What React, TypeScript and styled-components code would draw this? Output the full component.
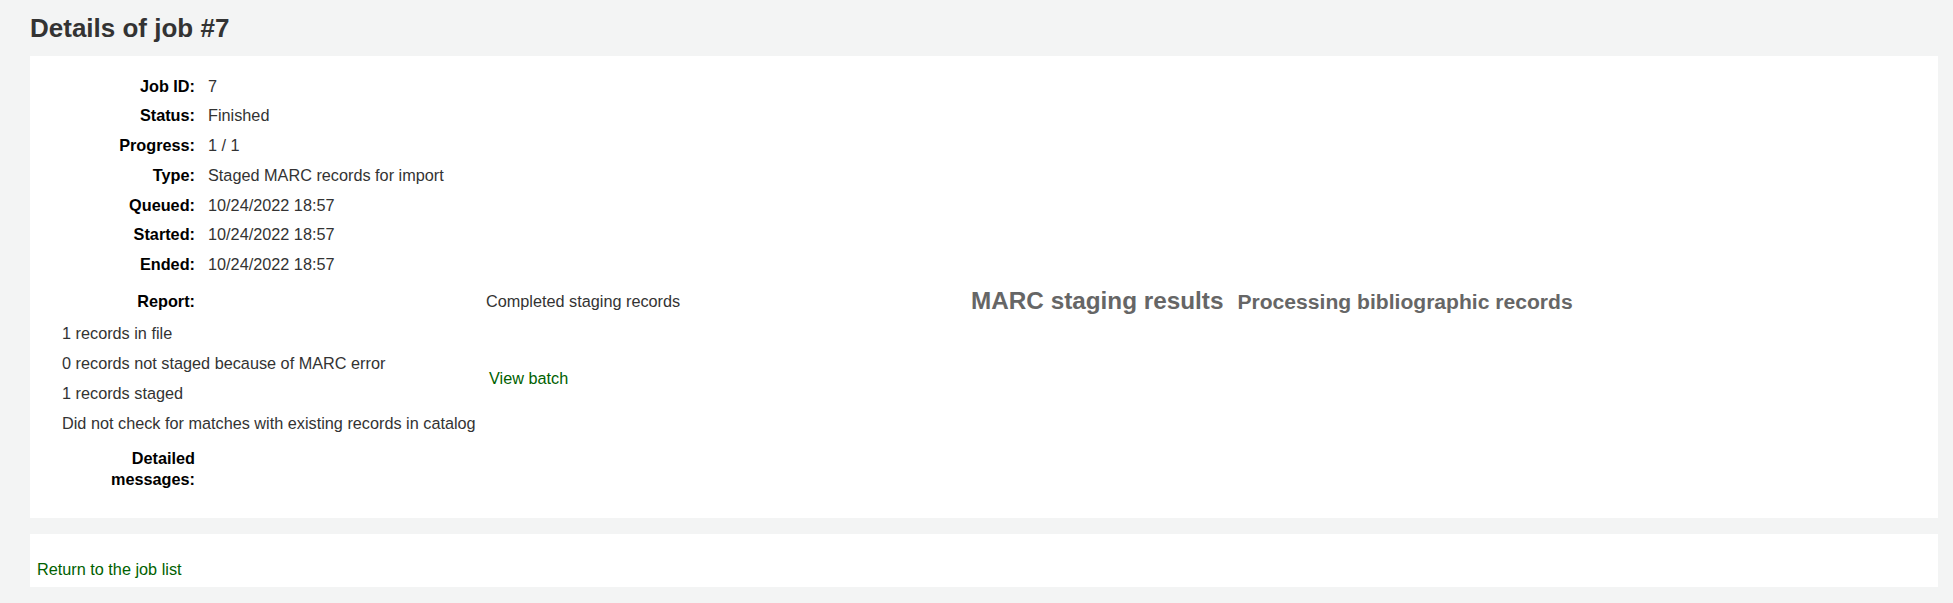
import styled, { createGlobalStyle } from "styled-components";

const GlobalStyle = createGlobalStyle`
  html, body {
    margin: 0;
    padding: 0;
    background: #f3f4f4;
  }
  body {
    font-family: "Liberation Sans", Arial, sans-serif;
    font-size: 16.25px;
    line-height: 22.75px;
    color: #333;
  }
`;

const Main = styled.main`
  padding: 6px 15px 18px 30px;
`;

const PageTitle = styled.h1`
  margin: 0 0 6px;
  font-size: 26px;
  line-height: 44px;
  font-weight: bold;
  color: #333;
`;

const Panel = styled.div<{ $pad: string }>`
  background: #fff;
  padding: ${(p) => p.$pad};
`;

const FieldList = styled.ol<{ $top?: number }>`
  list-style: none;
  margin: 0;
  padding: ${(p) => p.$top ?? 0}px 0 0 19px;
`;

const Field = styled.li`
  display: flex;
  align-items: flex-start;
  padding: 3.5px 0;
`;

const Label = styled.span<{ $tight?: boolean }>`
  flex: 0 0 146px;
  text-align: right;
  font-weight: bold;
  color: #000;
  margin-right: 13px;
  line-height: ${(p) => (p.$tight ? "21px" : "inherit")};
`;

const Value = styled.span`
  color: #333;
`;

const ReportGrid = styled.div`
  display: grid;
  grid-template-columns: 437px 485px 1fr;
  align-items: center;
  row-gap: 2.5px;
  padding: 7px 0 4px 19px;
`;

const ReportLabel = styled(Label)`
  display: block;
  width: 146px;
`;

const Lines = styled.div`
  padding-left: 13px;
`;

const Line = styled.div`
  padding: 3.5px 0;
  white-space: nowrap;
`;

const Headings = styled.div`
  display: flex;
  align-items: baseline;
  gap: 14px;
  color: #666;
  font-weight: bold;
`;

const ResultsTitle = styled.h2`
  margin: 0;
  font-size: 24.3px;
  line-height: 29px;
`;

const SubTitle = styled.h3`
  margin: 0;
  font-size: 21.1px;
  line-height: 29px;
`;

const Link = styled.a<{ $shift?: number }>`
  color: #006100;
  text-decoration: none;
  padding-left: ${(p) => p.$shift ?? 0}px;
`;

const Spacer = styled.div`
  height: 16px;
`;

const fields: [string, string][] = [
  ["Job ID:", "7"],
  ["Status:", "Finished"],
  ["Progress:", "1 / 1"],
  ["Type:", "Staged MARC records for import"],
  ["Queued:", "10/24/2022 18:57"],
  ["Started:", "10/24/2022 18:57"],
  ["Ended:", "10/24/2022 18:57"],
];

const reportLines = [
  "1 records in file",
  "0 records not staged because of MARC error",
  "1 records staged",
  "Did not check for matches with existing records in catalog",
];

export default function App() {
  return (
    <>
      <GlobalStyle />
      <Main>
        <PageTitle>Details of job #7</PageTitle>
        <Panel $pad="15px 0 25px 0">
          <FieldList>
            {fields.map(([label, value]) => (
              <Field key={label}>
                <Label>{label}</Label>
                <Value>{value}</Value>
              </Field>
            ))}
          </FieldList>
          <ReportGrid>
            <ReportLabel>Report:</ReportLabel>
            <Value>Completed staging records</Value>
            <Headings>
              <ResultsTitle>MARC staging results</ResultsTitle>
              <SubTitle>Processing bibliographic records</SubTitle>
            </Headings>
            <Lines>
              {reportLines.map((l) => (
                <Line key={l}>{l}</Line>
              ))}
            </Lines>
            <div>
              <Link href="#" $shift={3}>View batch</Link>
            </div>
          </ReportGrid>
          <FieldList $top={2.5}>
            <Field>
              <Label $tight>Detailed messages:</Label>
            </Field>
          </FieldList>
        </Panel>
        <Spacer />
        <Panel $pad="24px 7px 6px 7px">
          <Link href="#">Return to the job list</Link>
        </Panel>
      </Main>
    </>
  );
}
